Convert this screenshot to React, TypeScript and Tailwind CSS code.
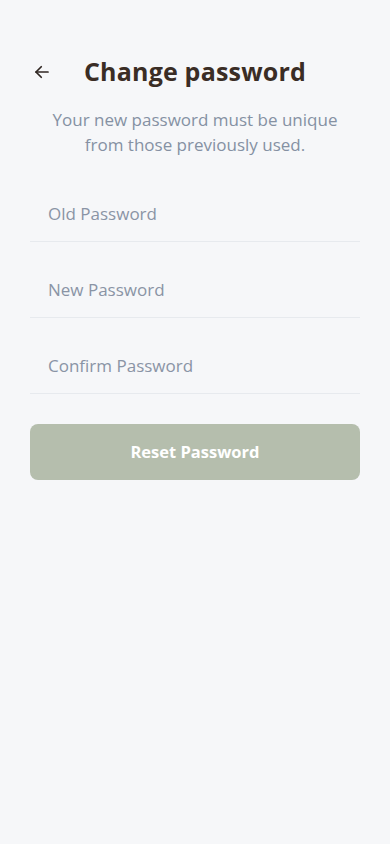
import React from "react";

export default function App() {
  const fields = ["Old Password", "New Password", "Confirm Password"];
  return (
    <div
      className="min-h-[844px] w-full bg-[#f6f7f9] pt-[56px]"
      style={{ fontFamily: '"Open Sans", "Noto Sans", sans-serif' }}
    >
      <div className="flex items-center px-[33px] h-[32px]">
        <button className="w-[18px] h-[18px] flex items-center justify-center text-[#2f2622]">
          <svg width="18" height="18" viewBox="0 0 24 24" fill="none" stroke="currentColor" strokeWidth="2.3" strokeLinecap="round" strokeLinejoin="round">
            <path d="M20 12H4" />
            <path d="M11 5l-7 7 7 7" />
          </svg>
        </button>
        <h1 className="flex-1 text-center text-[25px] font-bold text-[#3a2d25] tracking-[0.2px]">
          Change password
        </h1>
        <div className="w-[18px]" />
      </div>
      <p className="mt-[19px] px-[30px] text-center text-[17px] leading-[25px] text-[#8591a3]">
        Your new password must be unique
        <br />
        from those previously used.
      </p>
      <div className="mt-[9px] px-[30px] flex flex-col">
        {fields.map((f) => (
          <div key={f} className="h-[76px] border-b border-[#e7eaee] flex items-end">
            <input
              type="password"
              placeholder={f}
              className="w-full bg-transparent px-[18px] pb-[16px] leading-[22px] text-[17px] text-[#3a2d25] placeholder:text-[#8a94a5] outline-none"
            />
          </div>
        ))}
        <button className="mt-[30px] h-[56px] w-full rounded-[8px] bg-[#b5bead] text-white text-[16.5px] font-bold">
          Reset Password
        </button>
      </div>
    </div>
  );
}
